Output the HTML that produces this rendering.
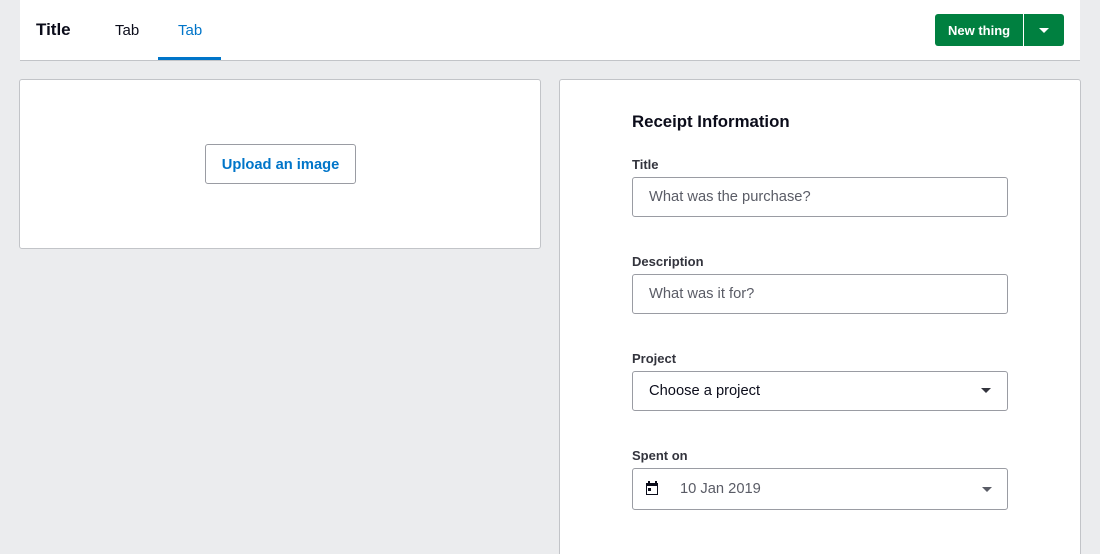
<!DOCTYPE html>
<html style="width:1100px;height:554px;overflow:hidden"><head><style>
*{box-sizing:border-box;margin:0;padding:0}
body{width:1100px;height:554px;background:#ebecee;font-family:"Liberation Sans",sans-serif;position:relative;overflow:hidden;color:#0b0c1a}
.hdr{position:absolute;left:20px;top:0;width:1060px;height:61px;background:#fff;border-bottom:1px solid #c2c4c8}
.abs{position:absolute}
.card{position:absolute;background:#fff;border:1px solid #c2c4c8;border-radius:3px}
.lbl{position:absolute;left:632px;font-size:13px;font-weight:bold;color:#33343d}
.inp{position:absolute;left:632px;width:376px;height:40px;border:1px solid #9a9ca3;border-radius:3px;background:#fff;font-size:14.7px;line-height:39px;padding-left:16px;color:#5a5c66}
.caret{position:absolute;width:0;height:0;border-left:5px solid transparent;border-right:5px solid transparent;border-top:5px solid #33343d}
</style></head><body>
<div class="hdr">
<div class="abs" style="left:16px;top:20px;font-size:17px;font-weight:bold">Title</div>
<div class="abs" style="left:95px;top:22px;font-size:15px">Tab</div>
<div class="abs" style="left:158px;top:22px;font-size:15px;color:#0075c9">Tab</div>
<div class="abs" style="left:138px;top:57px;width:63px;height:3px;background:#0075c9"></div>
<div class="abs" style="left:915px;top:14px;width:129px;height:32px;background:#008040;border-radius:3px"></div>
<div class="abs" style="left:928px;top:23px;font-size:13px;font-weight:bold;color:#fff">New thing</div>
<div class="abs" style="left:1003px;top:14px;width:1px;height:32px;background:#fff"></div>
<div class="caret" style="left:1019px;top:28px;border-top-color:#fff"></div>
</div>
<div class="card" style="left:19px;top:79px;width:522px;height:170px"></div>
<div class="abs" style="left:205px;top:144px;width:151px;height:40px;border:1px solid #9a9ca3;border-radius:3px;background:#fff;color:#0075c9;font-weight:bold;font-size:14.7px;text-align:center;line-height:40px">Upload an image</div>
<div class="card" style="left:559px;top:79px;width:522px;height:490px"></div>
<div class="abs" style="left:632px;top:112px;font-size:16.8px;font-weight:bold">Receipt Information</div>
<div class="lbl" style="top:157px">Title</div>
<div class="inp" style="top:177px">What was the purchase?</div>
<div class="lbl" style="top:254px">Description</div>
<div class="inp" style="top:274px">What was it for?</div>
<div class="lbl" style="top:351px">Project</div>
<div class="inp" style="top:371px;color:#0b0c1a">Choose a project</div>
<div class="caret" style="left:981px;top:388px"></div>
<div class="lbl" style="top:448px">Spent on</div>
<div class="inp" style="top:468px;height:42px;line-height:41px;padding-left:47px">10 Jan 2019</div>
<div class="abs" style="left:646px;top:483px;width:12px;height:12px;border:1.5px solid #0b0c1a;border-top-width:3px"></div>
<div class="abs" style="left:648px;top:488px;width:3px;height:3px;background:#0b0c1a"></div>
<div class="abs" style="left:648px;top:481px;width:1.5px;height:2px;background:#0b0c1a"></div>
<div class="abs" style="left:655px;top:481px;width:1.5px;height:2px;background:#0b0c1a"></div>
<div class="caret" style="left:982px;top:487px;border-top-color:#5a5c66"></div>
</body></html>
